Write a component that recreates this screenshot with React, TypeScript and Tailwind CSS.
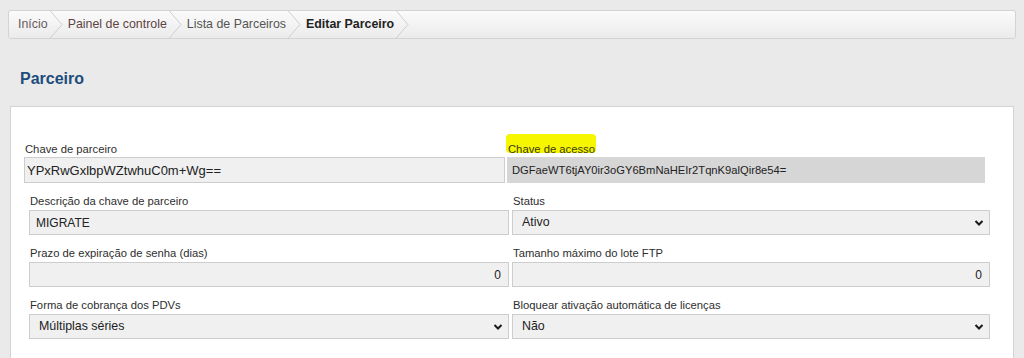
import React from 'react';

const crumbs = [
  { label: 'Início', color: 'text-[#6a5c5c]' },
  { label: 'Painel de controle', color: 'text-[#5e4444]' },
  { label: 'Lista de Parceiros', color: 'text-[#555]' },
  { label: 'Editar Parceiro', color: 'text-[#222] font-bold' },
];

const Chevron: React.FC = () => (
  <svg width="14" height="29" viewBox="0 0 14 29" className="shrink-0">
    <polyline points="0.5,0 13,14.5 0.5,29" fill="none" stroke="#cfcfcf" strokeWidth="1" />
  </svg>
);

const SelectArrow: React.FC = () => (
  <svg
    width="10"
    height="7"
    viewBox="0 0 10 7"
    className="pointer-events-none absolute right-[6px] top-1/2 -translate-y-1/2"
  >
    <polyline points="1.5,1.5 5,5 8.5,1.5" fill="none" stroke="#1a1a1a" strokeWidth="2" />
  </svg>
);

const Label: React.FC<{ children: React.ReactNode }> = ({ children }) => (
  <div className="pl-[1px] text-[11.25px] leading-[14px] text-[#2e2e2e]">{children}</div>
);

const TextField: React.FC<{ label: string; value: string; right?: boolean }> = ({ label, value, right }) => (
  <div>
    <Label>{label}</Label>
    <input
      readOnly
      defaultValue={value}
      className={`mt-[2px] block h-[25px] w-full border border-[#cdcdcd] bg-[#f0f0f0] text-[12px] text-[#222] outline-none ${
        right ? 'pr-[7px] text-right' : 'pl-[6px]'
      }`}
    />
  </div>
);

const SelectField: React.FC<{ label: string; value: string }> = ({ label, value }) => (
  <div>
    <Label>{label}</Label>
    <div className="relative mt-[2px]">
      <select
        defaultValue={value}
        className="block h-[25px] w-full appearance-none border border-[#cdcdcd] bg-[#f0f0f0] pl-[9px] text-[12.4px] text-[#222] outline-none"
      >
        <option>{value}</option>
      </select>
      <SelectArrow />
    </div>
  </div>
);

export default function App() {
  return (
    <div className="min-h-screen overflow-hidden bg-[#eaeaea] font-['Liberation_Sans',Arial,sans-serif]">
      {/* Breadcrumb */}
      <div className="ml-[8px] mt-[10px] flex h-[29px] w-[1008px] items-center rounded-[3px] border border-[#d3d3d3] bg-linear-to-b from-[#fbfbfb] to-[#ebebeb] pl-[9px] text-[12.4px]">
        {crumbs.map((c, i) => (
          <div key={i} className="flex h-full items-center">
            <span className={`${i === 0 ? '' : 'pl-[5px]'} pr-[1px] ${c.color}`}>{c.label}</span>
            <Chevron />
          </div>
        ))}
      </div>

      {/* Title */}
      <h1 className="mt-[30px] h-[20px] pl-[20px] text-[16px] font-bold leading-[20px] text-[#1d4c7c]">Parceiro</h1>

      {/* Panel */}
      <div className="ml-[10px] mt-[17px] h-[260px] w-[1004px] border border-[#d3d3d3] bg-white pt-[35px]">
        {/* Row 1 */}
        <div className="grid grid-cols-[481px_478px] gap-x-[2px] pl-[13px]">
          <div>
            <Label>Chave de parceiro</Label>
            <input
              readOnly
              defaultValue="YPxRwGxlbpWZtwhuC0m+Wg=="
              className="mt-[1px] block h-[26px] w-full border border-[#cdcdcd] bg-[#f0f0f0] pl-[2px] text-[13px] text-[#222] outline-none"
            />
          </div>
          <div>
            <div className="relative pl-[1px] text-[11.25px] leading-[14px]">
              <span className="absolute left-[-1px] top-[-8px] h-[19px] w-[90px] rounded-[4px] bg-[#f6f600]" />
              <span className="relative text-[#3a3a10]">Chave de acesso</span>
            </div>
            <div className="mt-[1px] flex h-[26px] w-full items-center bg-[#d6d6d6] pl-[5px] text-[11.2px] text-[#222]">
              DGFaeWT6tjAY0ir3oGY6BmNaHEIr2TqnK9alQir8e54=
            </div>
          </div>
        </div>

        {/* Rows 2-4 */}
        <div className="mt-[11px] grid grid-cols-[480px_478px] gap-x-[3px] gap-y-[11px] pl-[18px]">
          <TextField label="Descrição da chave de parceiro" value="MIGRATE" />
          <SelectField label="Status" value="Ativo" />
          <TextField label="Prazo de expiração de senha (dias)" value="0" right />
          <TextField label="Tamanho máximo do lote FTP" value="0" right />
          <SelectField label="Forma de cobrança dos PDVs" value="Múltiplas séries" />
          <SelectField label="Bloquear ativação automática de licenças" value="Não" />
        </div>
      </div>
    </div>
  );
}
